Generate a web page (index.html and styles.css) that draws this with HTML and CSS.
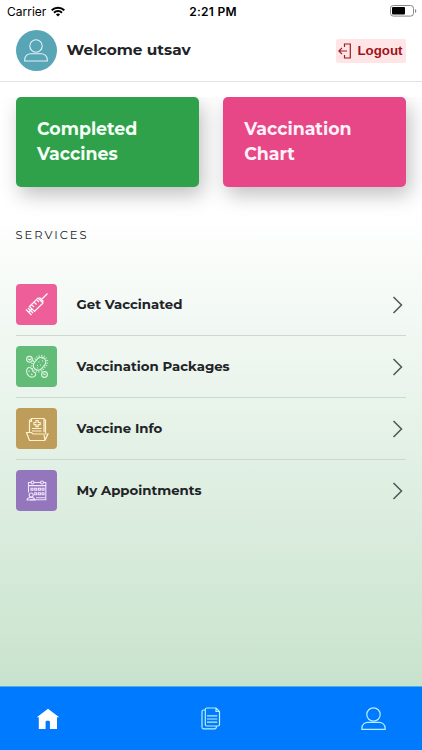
FILE: index.html
```html
<!DOCTYPE html>
<html lang="en">
<head>
<meta charset="utf-8">
<title>Vaccination</title>
<link rel="stylesheet" href="styles.css">
</head>
<body>
<div class="app">
  <div class="status">
    <div class="carrier"><span>Carrier</span>
      <svg width="14" height="11" viewBox="0 0 14 11" fill="none" stroke="#000" stroke-width="2"><path d="M.7 4.2a9 9 0 0 1 12.6 0M3 6.7a5.7 5.7 0 0 1 8 0"/><path d="M7 10.6 4.9 8.500a3 3 0 0 1 4.200 0z" fill="#000" stroke="none"/></svg>
    </div>
    <span class="time">2:21 PM</span>
    <svg class="battery" width="27" height="12" viewBox="0 0 27 12"><rect x=".5" y=".5" width="23" height="10.600" rx="2.800" fill="none" stroke="#888"/><rect x="2" y="2" width="13" height="7.600" rx="1" fill="#000"/><path d="M25 4v4q1.300-.6 1.300-2T25 4z" fill="#888"/></svg>
  </div>
  <header class="header">
    <div class="avatar"><svg width="24" height="23" viewBox="0 0 24 23" fill="none" stroke="#e4f4f6" stroke-width="1.100"><circle cx="12" cy="7" r="6.200"/><path d="M.7 22v-1.500c0-3.500 2.800-5.700 6-5.700h10.600c3.200 0 6 2.200 6 5.700V22z"/></svg></div>
    <h1 class="welcome">Welcome utsav</h1>
    <button class="logout"><svg width="14" height="16" viewBox="0 0 14 16" fill="none" stroke="#a01a22" stroke-width="1.200"><path d="M6.500 4V1h5.800v14H6.500v-3M9 8H1M4 4.900.9 8 4 11.100"/></svg><span>Logout</span></button>
  </header>
  <main class="content">
    <section class="cards">
      <div class="card green"><span>Completed</span><span>Vaccines</span></div>
      <div class="card pink"><span>Vaccination</span><span>Chart</span></div>
    </section>
    <h2 class="title">SERVICES</h2>
    <ul class="list">
      <li class="row">
        <div class="tile t1"><svg width="41" height="41" viewBox="0 0 41 41" fill="none" stroke="#fff" stroke-width="1.200"><path d="m31.500 9.500-6 6M23.500 13.500l4 4M13.500 22.500 22 14l5 5-8.500 8.500zM16 25l-3.500 3.500M10 25.500l5.500 5.500M15.500 20.500l2.500 2.500M18 18l2.500 2.500M20.500 15.500 23 18"/><path d="m12 24 5 5"/></svg></div>
        <span class="label">Get Vaccinated</span>
        <svg class="chev" width="12" height="18" viewBox="0 0 12 18"><path d="m1.500 1 8 8-8 8"/></svg>
      </li>
      <li class="row">
        <div class="tile t2"><svg width="41" height="41" viewBox="0 0 41 41" fill="none" stroke="#dcf7df" stroke-width="1.100"><rect x="16.500" y="13" width="14" height="9.500" rx="4.700" transform="rotate(-48 23.500 17.700)"/><rect x="14.900" y="11.400" width="17.200" height="12.700" rx="6.300" stroke-width="1.800" stroke-dasharray=".9 1.600" transform="rotate(-48 23.500 17.700)"/><path d="M21 19.500h1M24 19h1M22.500 16h1M26 15h1M21 22h1M25.500 12.500h1" stroke-width="1.100"/><circle cx="13.500" cy="13.300" r="2.900"/><path d="m12 13 1.500 1 2-1.500M27 28h1.500l1 1"/><circle cx="28.500" cy="28.500" r="2.900"/><path d="M15 22c-3-1.500-5 1-4.300 4.300.7 3.700 4 5.600 7 4.500 3-1.200 2.500-4 .3-4.600-2-.5-1.200-3.500-3-4.200z"/><path d="M13 24.500v1.500M15 28l1.500.7"/></svg></div>
        <span class="label">Vaccination Packages</span>
        <svg class="chev" width="12" height="18" viewBox="0 0 12 18"><path d="m1.500 1 8 8-8 8"/></svg>
      </li>
      <li class="row">
        <div class="tile t3"><svg width="41" height="41" viewBox="0 0 41 41" fill="none" stroke="#fff0d0" stroke-width="1.200"><path d="M13.500 24V12.500l2-2H28V24M15.500 10.500v3h-2M28 12h1.500v13M10.500 24.500h5l1.500 1.500h15l-3.500 6.500H13.500zM28 27l1 5.500M32 26l-3 6.500"/><path d="M20 12.500h2.200v2h2v2.200h-2v2H20v-2h-2v-2.200h2zM16 20.500h9.500M16 23h9.500"/></svg></div>
        <span class="label">Vaccine Info</span>
        <svg class="chev" width="12" height="18" viewBox="0 0 12 18"><path d="m1.500 1 8 8-8 8"/></svg>
      </li>
      <li class="row">
        <div class="tile t4"><svg width="41" height="41" viewBox="0 0 41 41" fill="none" stroke="#f1e5ff" stroke-width="1.100"><path d="M12.500 22.500v-10h17.300v17.300H14M12.500 15.600h17.300"/><circle cx="16.500" cy="12.500" r="1.500" fill="#9476bd"/><circle cx="26" cy="12.500" r="1.500" fill="#9476bd"/><path d="M15 18.300h2v2h-2zM18.700 18.300h2v2h-2zM22.400 18.300h2v2h-2zM26 18.300h2v2h-2zM18.700 22.800h2v2h-2zM22.400 22.800h2v2h-2zM26 22.800h2v2h-2zM20 27.700h9"/><circle cx="15.200" cy="25" r="2"/><path d="M11 30c0-3 7.500-3.800 8 0z"/></svg></div>
        <span class="label">My Appointments</span>
        <svg class="chev" width="12" height="18" viewBox="0 0 12 18"><path d="m1.500 1 8 8-8 8"/></svg>
      </li>
    </ul>
  </main>
  <nav class="nav">
    <svg width="24" height="22" viewBox="0 0 24 22" fill="#fff"><path d="M12 .8.8 9.300h2V21h6.800v-7q0-1.200 1.200-1.200h1.900q1.200 0 1.200 1.200v7H21V9.300h2.200z"/></svg>
    <svg width="20" height="24" viewBox="0 0 20 24" fill="none" stroke="#b9efff" stroke-width="1.200"><path d="M4.300 2.500q0-1.500 1.500-1.500H15l3.500 3.500v13q0 1.500-1.500 1.500H5.800q-1.500 0-1.500-1.500zM15 1v3.500h3.500M4.300 3H2.500Q1 3 1 4.500v15.800q0 1.500 1.500 1.500h11.200q1.800 0 1.800-2.800M6 8.800h10.300M6 12h10.300M6 15.200h10.300"/></svg>
    <svg width="25" height="24" viewBox="0 0 25 24" fill="none" stroke="#b9efff" stroke-width="1.200"><circle cx="12.500" cy="7.500" r="6.700"/><path d="M.9 22.400V21c0-3.500 2.800-5.700 6-5.700h11.200c3.200 0 6 2.200 6 5.700v1.400z"/></svg>
  </nav>
</div>
</body>
</html>
```
FILE: styles.css
```css
* { box-sizing: border-box; }
body { margin: 0; font-family: "Montserrat", "Inter", sans-serif; color: #212327; background: #fff; }
.app { width: 422px; height: 750px; display: flex; flex-direction: column; overflow: hidden; }
.status { height: 22px; flex: none; padding: 0 5px 0 7px; display: grid; grid-template-columns: 1fr auto 1fr; align-items: center; font-family: Inter, sans-serif; font-size: 12px; color: #000; }
.carrier { display: flex; align-items: center; gap: 5px; }
.time { font-weight: 600; letter-spacing: .25px; padding-left: 2px; }
.battery { justify-self: end; }
.header { height: 60px; flex: none; display: flex; align-items: center; padding: 0 15.600px 2px; border-bottom: 1px solid #e2e2e2; }
.avatar { width: 41px; height: 41px; border-radius: 50%; background: #58a5b6; display: grid; place-items: center; }
.welcome { margin: 0 auto 2px 10px; font-size: 15.300px; line-height: 20px; font-weight: 700; white-space: nowrap; }
.logout { width: 70px; height: 24px; display: flex; align-items: center; gap: 5px; padding: 0 0 0 2px; border: 0; border-radius: 2px; background: #ffe5e6; color: #a0141c; font: 700 13.330px "Liberation Sans", sans-serif; }
.content { flex: 1; margin-top: 15px; padding: 0 15.600px; overflow: hidden; background: linear-gradient(#fff 0%, #fff 19%, #c8e3cd 100%); }
.cards { display: flex; justify-content: space-between; }
.card { width: 183.600px; height: 89.500px; padding: 20px 21.400px; border-radius: 5px; color: #f5fff6; font-size: 17.400px; line-height: 24.500px; font-weight: 700; display: flex; flex-direction: column; box-shadow: 4px 8px 20px rgba(0,0,0,.25); }
.card span { white-space: nowrap; }
.green { background: #2ea14a; }
.pink { background: #e74787; color: #fff2f8; }
.title { margin: 40px 0 0; font-size: 11.500px; line-height: 16px; font-weight: 400; letter-spacing: 1.950px; }
.list { list-style: none; margin: 31.500px 0 0; padding: 0; }
.row { height: 62.100px; display: flex; align-items: center; border-bottom: 1px solid #ccd9d2; }
.row:last-child { border-bottom: 0; height: 61px; }
.tile { width: 41px; height: 41px; border-radius: 4px; }
.tile svg { display: block; }
.t1 { background: #ee5f99; }
.t2 { background: #62bb77; }
.t3 { background: #bd9d59; }
.t4 { background: #9476bd; }
.label { margin: 0 auto 2px 20px; font-size: 13.300px; font-weight: 700; white-space: nowrap; }
.chev { margin-right: 2px; fill: none; stroke: #505653; stroke-width: 1.500; }
.nav { height: 64px; flex: none; background: #007aff; border-top: 1px solid #55aee6; display: flex; justify-content: space-between; align-items: center; padding: 0 36px; }
```
